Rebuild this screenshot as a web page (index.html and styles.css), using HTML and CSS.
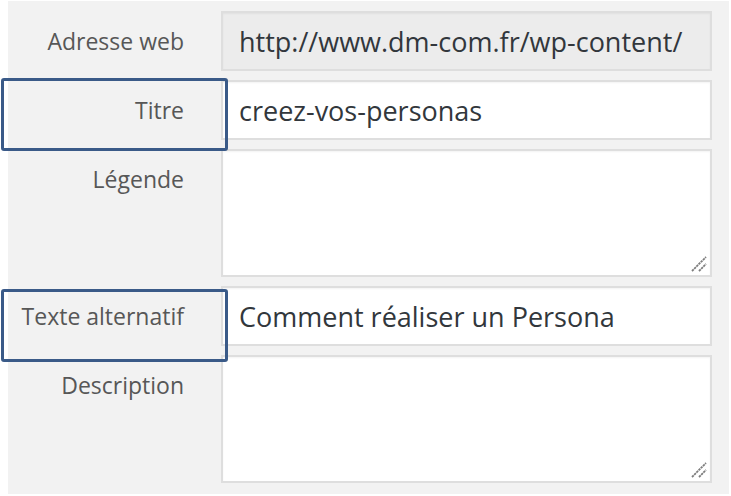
FILE: index.html
```html
<!DOCTYPE html>
<html lang="fr">
<head>
    <meta charset="UTF-8">
    <meta name="viewport" content="width=device-width, initial-scale=1.0">
    <title>Détails du fichier joint</title>
    <link rel="stylesheet" href="styles.css">
</head>
<body>

    <div class="panel">

        <div class="row">
            <label class="lbl" for="url">Adresse web</label>
            <input class="field readonly" type="text" id="url" value="http://www.dm-com.fr/wp-content/" readonly>
        </div>

        <div class="row">
            <span class="mark"></span>
            <label class="lbl" for="title">Titre</label>
            <input class="field" type="text" id="title" value="creez-vos-personas">
        </div>

        <div class="row">
            <label class="lbl" for="caption">Légende</label>
            <div class="area">
                <textarea class="field" id="caption"></textarea>
                <svg class="grip" width="16" height="16" viewBox="0 0 16 16"><path d="M1 15 L15 1 M8 15 L15 8" stroke="#7d7d7d" stroke-width="1.8" stroke-dasharray="2.4 0.7"/></svg>
            </div>
        </div>

        <div class="row">
            <span class="mark mark-low"></span>
            <label class="lbl" for="alt">Texte alternatif</label>
            <input class="field" type="text" id="alt" value="Comment réaliser un Persona">
        </div>

        <div class="row">
            <label class="lbl" for="desc">Description</label>
            <div class="area">
                <textarea class="field" id="desc"></textarea>
                <svg class="grip" width="16" height="16" viewBox="0 0 16 16"><path d="M1 15 L15 1 M8 15 L15 8" stroke="#7d7d7d" stroke-width="1.8" stroke-dasharray="2.4 0.7"/></svg>
            </div>
        </div>

    </div>

</body>
</html>
```

FILE: styles.css
```css
body { margin: 0; background: #fff; font-family: "Open Sans", "Noto Sans", sans-serif; }
.panel { margin: 1px 2px 2px 8px; padding: 10px 17px 11px 0; background: #f2f2f2; display: flex; flex-direction: column; gap: 9px; }
.row { position: relative; display: grid; grid-template-columns: 213px 491px; }
.lbl { text-align: right; padding: 15px 37px 0 0; font-size: 23px; line-height: 30px; color: #575757; }
.field { box-sizing: border-box; width: 100%; height: 60px; margin: 0; padding: 0 16px; border: 2px solid #dedede; background: #fff; font-family: inherit; font-size: 27px; color: #32373c; box-shadow: inset 0 1px 2px rgba(0,0,0,.05); outline: none; }
.readonly { background: #ececec; }
.area { position: relative; }
textarea.field { display: block; height: 128px; resize: none; }
.grip { position: absolute; right: 5px; bottom: 5px; }
.mark { position: absolute; z-index: 1; left: -7px; top: -2px; width: 227px; height: 73px; box-sizing: border-box; border: 3px solid #3a5a88; border-radius: 3px; pointer-events: none; }
.mark-low { top: 3px; }
```
